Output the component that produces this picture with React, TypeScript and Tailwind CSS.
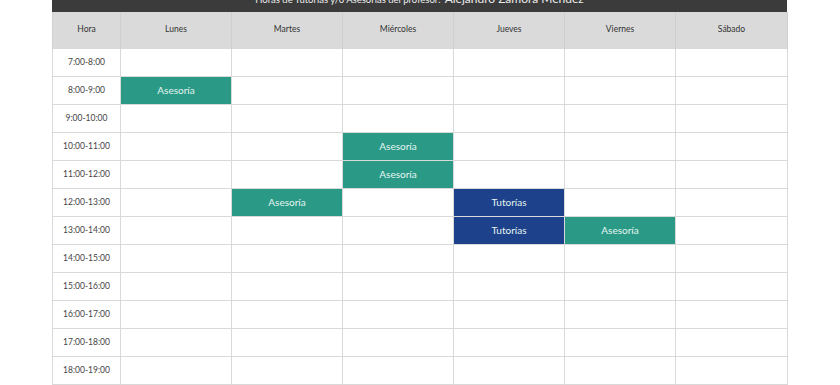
import React from "react";

const days = ["Lunes", "Martes", "Miércoles", "Jueves", "Viernes", "Sábado"];
const hours = [
  "7:00-8:00",
  "8:00-9:00",
  "9:00-10:00",
  "10:00-11:00",
  "11:00-12:00",
  "12:00-13:00",
  "13:00-14:00",
  "14:00-15:00",
  "15:00-16:00",
  "16:00-17:00",
  "17:00-18:00",
  "18:00-19:00",
];

type Kind = "A" | "T";
const slots: Record<string, Kind> = {
  "1-0": "A",
  "3-2": "A",
  "4-2": "A",
  "5-1": "A",
  "5-3": "T",
  "6-3": "T",
  "6-4": "A",
};

export default function App() {
  return (
    <div
      className="w-[840px] h-[385px] overflow-hidden bg-white"
      style={{ fontFamily: "Lato, 'Open Sans', sans-serif" }}
    >
      <div className="ml-[52px] w-[735px]">
        <div className="h-[12px] bg-[#3b3b3b] overflow-hidden flex justify-center">
          <div className="mt-[-7px] leading-none text-[#ececec] whitespace-nowrap flex items-baseline gap-[4px]">
            <span className="text-[9.5px]">Horas de Tutorías y/o Asesorías del profesor:</span>
            <span className="text-[12px]">Alejandro Zamora Méndez</span>
          </div>
        </div>
        <table className="table-fixed border-collapse w-[735px]">
          <colgroup>
            <col className="w-[68px]" />
            <col className="w-[111px]" />
            <col className="w-[111px]" />
            <col className="w-[111px]" />
            <col className="w-[111px]" />
            <col className="w-[111px]" />
            <col className="w-[112px]" />
          </colgroup>
          <thead>
            <tr className="h-[36px] bg-[#dadada]">
              <th className="border-x border-[#d0d0d0] text-[8.5px] font-normal text-[#333]">Hora</th>
              {days.map((d) => (
                <th key={d} className="border-x border-[#cfcfcf] text-[8.5px] font-normal text-[#333]">
                  {d}
                </th>
              ))}
            </tr>
          </thead>
          <tbody>
            {hours.map((h, r) => (
              <tr key={h} className="h-[28px]">
                <td className="border border-[#d9d9d9] text-center text-[8.5px] text-[#444] p-0">{h}</td>
                {days.map((d, c) => {
                  const k = slots[`${r}-${c}`];
                  const bg = k === "A" ? "bg-[#2a9a87]" : k === "T" ? "bg-[#1d418a]" : "bg-white";
                  return (
                    <td
                      key={d}
                      className={`border border-[#d9d9d9] text-center text-[10px] text-[#e6f5f1] p-0 ${bg}`}
                    >
                      {k === "A" ? "Asesoría" : k === "T" ? "Tutorías" : ""}
                    </td>
                  );
                })}
              </tr>
            ))}
          </tbody>
        </table>
      </div>
    </div>
  );
}
